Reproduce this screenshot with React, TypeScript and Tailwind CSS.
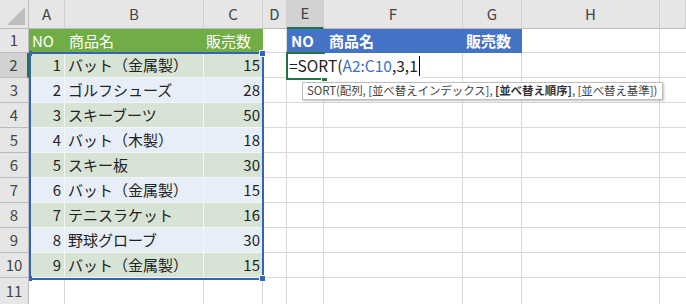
import React from 'react';

const cols = ['A', 'B', 'C', 'D', 'E', 'F', 'G', 'H', ''];

const data: [number, string, number][] = [
  [1, 'バット（金属製）', 15],
  [2, 'ゴルフシューズ', 28],
  [3, 'スキーブーツ', 50],
  [4, 'バット（木製）', 18],
  [5, 'スキー板', 30],
  [6, 'バット（金属製）', 15],
  [7, 'テニスラケット', 16],
  [8, '野球グローブ', 30],
  [9, 'バット（金属製）', 15],
];

const font = { fontFamily: '"Noto Sans CJK JP", "Noto Sans", sans-serif' };

const App: React.FC = () => {
  return (
    <div className="relative w-[686px] h-[304px] overflow-hidden bg-white text-[#222]" style={font}>
      <div className="grid grid-cols-[29px_36px_139px_59px_24px_37px_139px_59px_138px_26px] grid-rows-[29px_24px_repeat(9,25px)_26px]">
        {/* Corner */}
        <div className="relative bg-[#e6e6e6] border-r border-b border-[#bcbcbc]">
          <svg className="absolute right-[3px] bottom-[3px]" width="18" height="18">
            <polygon points="18,0 18,18 0,18" fill="#bdbdbd" />
          </svg>
        </div>
        {/* Column headers */}
        {cols.map((c, i) => (
          <div
            key={c + i}
            className={`flex items-center justify-center text-[15px] text-[#444] border-r border-[#cfcfcf] ${
              c === 'E' ? 'bg-[#d2d2d2] border-b-2 border-b-[#217346]' : 'bg-[#e6e6e6] border-b border-b-[#bcbcbc]'
            }`}
          >
            {c}
          </div>
        ))}

        {/* Row 1 */}
        <div className="flex items-center justify-center text-[15px] text-[#444] bg-[#e6e6e6] border-r border-b border-[#bcbcbc]">1</div>
        <div className="flex items-center px-[3px] bg-[#70ad47] text-white text-[15px]">NO</div>
        <div className="flex items-center px-[4px] bg-[#70ad47] text-white text-[15px]">商品名</div>
        <div className="flex items-center px-[2px] bg-[#70ad47] text-white text-[15px]">販売数</div>
        <div className="border-r border-b border-[#d9d9d9]" />
        <div className="flex items-center px-[4px] bg-[#4472c4] text-white text-[15px] font-bold">NO</div>
        <div className="flex items-center px-[5px] bg-[#4472c4] text-white text-[15px] font-bold">商品名</div>
        <div className="flex items-center px-[3px] bg-[#4472c4] text-white text-[15px] font-bold">販売数</div>
        <div className="border-r border-b border-[#d9d9d9]" />
        <div className="border-b border-[#d9d9d9]" />

        {/* Data rows */}
        {data.map(([no, name, qty], i) => {
          const band = i % 2 === 0 ? 'bg-[#d7e4d5]' : 'bg-[#e8eef8]';
          const rowNo = i + 2;
          return (
            <React.Fragment key={rowNo}>
              <div
                className={`flex items-center justify-center text-[15px] text-[#444] border-b border-[#bcbcbc] ${
                  rowNo === 2 ? 'bg-[#d2d2d2] border-r-2 border-r-[#217346]' : 'bg-[#e6e6e6] border-r'
                }`}
              >
                {rowNo}
              </div>
              <div className={`flex items-center justify-end px-[3px] text-[15px] border-r border-b border-[#f4f6f4] ${band}`}>{no}</div>
              <div className={`flex items-center px-[3px] text-[15px] border-r border-b border-[#f4f6f4] ${band}`}>{name}</div>
              <div className={`flex items-center justify-end px-[3px] text-[15px] border-b border-[#f4f6f4] ${band}`}>{qty}</div>
              <div className="border-r border-b border-[#d9d9d9]" />
              <div className="border-r border-b border-[#d9d9d9]" />
              <div className="border-r border-b border-[#d9d9d9]" />
              <div className="border-r border-b border-[#d9d9d9]" />
              <div className="border-r border-b border-[#d9d9d9]" />
              <div className="border-b border-[#d9d9d9]" />
            </React.Fragment>
          );
        })}

        {/* Row 11 */}
        <div className="flex items-center justify-center text-[15px] text-[#444] bg-[#e6e6e6] border-r border-[#bcbcbc]">11</div>
        {cols.map((c, i) => (
          <div key={'r11' + i} className={i < cols.length - 1 ? 'border-r border-[#d9d9d9]' : ''} />
        ))}
      </div>

      {/* Range reference highlight A2:C10 */}
      <div className="absolute left-[29px] top-[52px] w-[235px] h-[228px] border-2 border-[#3465b4] pointer-events-none" />
      <div className="absolute left-[29px] top-[51px] w-[3px] h-[5px] bg-[#3465b4]" />
      <div className="absolute left-[260px] top-[51px] w-[5px] h-[5px] bg-[#3465b4] outline outline-1 outline-white" />
      <div className="absolute left-[29px] top-[276px] w-[3px] h-[5px] bg-[#3465b4]" />
      <div className="absolute left-[260px] top-[276px] w-[5px] h-[5px] bg-[#3465b4] outline outline-1 outline-white" />

      {/* Active cell E2 in edit mode */}
      <div className="absolute left-[286px] top-[52px] w-[39px] h-[28px] border-2 border-r-0 border-[#217346]" />
      <div className="absolute left-[322px] top-[76px] w-[5px] h-[5px] bg-[#217346] outline outline-1 outline-white" />
      <div className="absolute left-[289px] top-[54px] h-[24px] flex items-center bg-white pr-[2px] text-[15.5px] leading-none">
        <span>=SORT(</span>
        <span className="text-[#3e72c0]">A2:C10</span>
        <span>,3,1</span>
        <span className="ml-[1px] w-px h-[20px] bg-black" />
      </div>

      {/* Function tooltip */}
      <div className="absolute left-[302px] top-[82px] w-[361px] h-[18px] px-[4px] flex items-center bg-white border border-[#bdbdbd] shadow-[1px_1px_2px_rgba(0,0,0,0.25)] text-[11.5px] tracking-[-0.1px] text-[#444] whitespace-nowrap leading-none overflow-hidden">
        SORT(配列, [並べ替えインデックス],&nbsp;<b className="text-[#333]">[並べ替え順序]</b>, [並べ替え基準])
      </div>
    </div>
  );
};

export default App;
